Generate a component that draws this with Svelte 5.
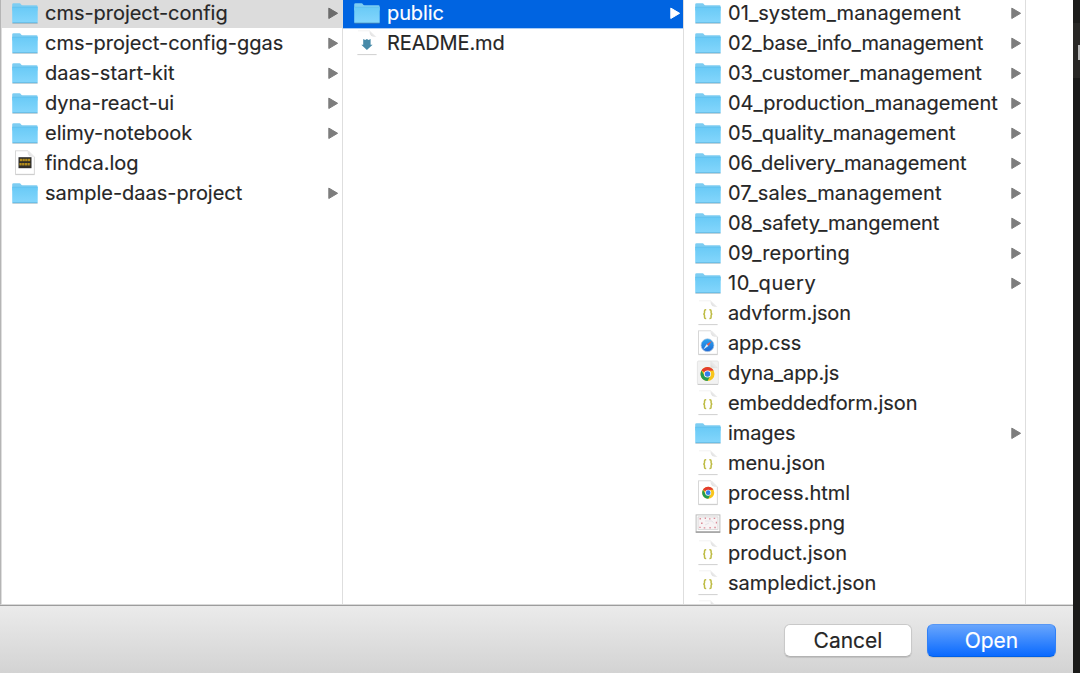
<script>
  const projects = [
    { name: 'cms-project-config', kind: 'folder', tracking: -0.03, selected: true },
    { name: 'cms-project-config-ggas', kind: 'folder', tracking: -0.02 },
    { name: 'daas-start-kit', kind: 'folder', tracking: 0.08 },
    { name: 'dyna-react-ui', kind: 'folder', tracking: -0.03 },
    { name: 'elimy-notebook', kind: 'folder', tracking: 0 },
    { name: 'findca.log', kind: 'log', tracking: -0.07 },
    { name: 'sample-daas-project', kind: 'folder', tracking: -0.02 }
  ];
  const project = [
    { name: 'public', kind: 'folder', tracking: -0.12, active: true },
    { name: 'README.md', kind: 'md', tracking: -0.13 }
  ];
  const contents = [
    { name: '01_system_management', kind: 'folder', tracking: 0.1 },
    { name: '02_base_info_management', kind: 'folder', tracking: -0.16 },
    { name: '03_customer_management', kind: 'folder', tracking: -0.1 },
    { name: '04_production_management', kind: 'folder', tracking: -0.03 },
    { name: '05_quality_management', kind: 'folder', tracking: -0.05 },
    { name: '06_delivery_management', kind: 'folder', tracking: -0.06 },
    { name: '07_sales_management', kind: 'folder', tracking: 0.12 },
    { name: '08_safety_mangement', kind: 'folder', tracking: -0.08 },
    { name: '09_reporting', kind: 'folder', tracking: 0.13 },
    { name: '10_query', kind: 'folder', tracking: 0.55 },
    { name: 'advform.json', kind: 'json', tracking: -0.11 },
    { name: 'app.css', kind: 'css', tracking: -0.13 },
    { name: 'dyna_app.js', kind: 'js', tracking: -0.13 },
    { name: 'embeddedform.json', kind: 'json', tracking: -0.07 },
    { name: 'images', kind: 'folder', tracking: -0.1 },
    { name: 'menu.json', kind: 'json', tracking: -0.05 },
    { name: 'process.html', kind: 'html', tracking: 0 },
    { name: 'process.png', kind: 'png', tracking: -0.08 },
    { name: 'product.json', kind: 'json', tracking: 0.05 },
    { name: 'sampledict.json', kind: 'json', tracking: 0.02 },
    { name: '', kind: 'json', tracking: 0 }
  ];
  const columns = [projects, project, contents];
</script>

<svg class="defs" width="0" height="0" aria-hidden="true">
  <defs>
    <linearGradient id="folderFill" x1="0" y1="0" x2="0" y2="1">
      <stop offset="0" stop-color="#69caf6" />
      <stop offset="1" stop-color="#84d6fc" />
    </linearGradient>
    <linearGradient id="fold" x1="0" y1="1" x2="1" y2="0">
      <stop offset="0" stop-color="#d8d8d8" />
      <stop offset="0.7" stop-color="#f4f4f4" />
    </linearGradient>
    <linearGradient id="safari" x1="0" y1="0" x2="0" y2="1">
      <stop offset="0" stop-color="#2aa5f2" />
      <stop offset="1" stop-color="#1c68d4" />
    </linearGradient>
  </defs>
</svg>

{#snippet page(outlined)}
  {#if outlined}
    <path d="M3.5 2.7h12.5l6.4 6.4v17.2h-18.9z" fill="#fff" stroke="#d3d3d3" stroke-width="0.9" />
  {/if}
  <path d="M15.6 2.4v1.8q0 4.9 6.9 4.9z" fill="url(#fold)" />
  <path d="M4 2.8h12" stroke="#ededed" stroke-width="0.7" />
  <path d="M3.4 26.6h19.2" stroke="#c9c9c9" stroke-width="0.9" />
{/snippet}

{#snippet chrome(cx, cy, scale)}
  <g transform="translate({cx} {cy}) scale({scale})">
    <circle r="7" fill="#f8c51c" />
    <path d="M0 0L-6.06-3.5A7 7 0 0 1 6.06-3.5L0-3.2z" fill="#e33b2e" />
    <path d="M-6.06-3.5A7 7 0 0 0 0 7L3 1.5-3 1.7z" fill="#239b50" />
    <circle r="3.5" fill="#fff" />
    <circle r="2.75" fill="#347de8" />
  </g>
{/snippet}

{#snippet icon(kind)}
  <svg class="icon" viewBox="0 0 26 30" width="26" height="30" aria-hidden="true">
    {#if kind === 'folder'}
      <path d="M.4 25.4h25.2" stroke="#6a8797" stroke-opacity=".4" stroke-width="1" />
      <path d="M.2 6.5Q.2 5.3 1.5 5.3h6c1.4 0 1.4 2 3 2h14q1.1 0 1.1 1.3v4H.2z" fill="#7dcdf2" />
      <path d="M.2 8.9h25.5v15.2q0 .9-.9.9H1.1q-.9 0-.9-.9z" fill="url(#folderFill)" />
      <path d="M.4 9.2h25.1" stroke="#5dbce9" stroke-width=".6" />
      <path d="M.5 24.6h25" stroke="#62b6df" stroke-width=".8" />
    {:else if kind === 'log'}
      {@render page(true)}
      <path d="M6.5 9.2h13v11h-13z" fill="#28282a" />
      <path d="M7.8 12h10.5M7.4 16.2h11" stroke="#b48c1b" stroke-width="2.5" stroke-dasharray="2.3 .4" />
      <path d="M7 14h12M7 18.9h12" stroke="#443a22" stroke-width=".7" />
    {:else if kind === 'md'}
      {@render page(false)}
      <path d="M9.2 11l2 1.1 1.7-1.1 1.7 1.1 2-1.1v5.8h2l-5.7 5.2-5.6-5.2h1.9z" fill="#478aa8" />
    {:else if kind === 'json'}
      {@render page(false)}
      <g fill="none" stroke="#bdbb42" stroke-width="1.5">
        <path d="M11.2 11.7h-.5q-1.2 0-1.2 1.3v1.8q0 1.3-1.3 1.3q1.3 0 1.3 1.3v1.8q0 1.3 1.2 1.3h.5" />
        <path d="M14.4 11.7h.5q1.2 0 1.2 1.3v1.8q0 1.3 1.3 1.3q-1.3 0-1.3 1.3v1.8q0 1.3-1.2 1.3h-.5" />
      </g>
    {:else if kind === 'css'}
      {@render page(true)}
      <circle cx="12.5" cy="17.2" r="6.4" fill="url(#safari)" stroke="#a5bfdb" stroke-width=".7" />
      <path d="M16.8 12.9l-3.4 5.2-1.8-1.8z" fill="#e9574a" />
      <path d="M8.3 21.5l3.3-5.2 1.8 1.8z" fill="#d8edfc" />
    {:else if kind === 'js'}
      <rect x="2.4" y="3" width="21" height="23.2" rx="1.2" fill="#f2f2f2" stroke="#dedede" stroke-width=".7" />
      <path d="M2.6 26.5h20.6" stroke="#c6c6c6" stroke-width=".9" />
      <path d="M15.8 3.2v6.5h6.6z" fill="url(#fold)" stroke="#dcdcdc" stroke-width=".4" />
      {@render chrome(12.5, 16, 1)}
    {:else if kind === 'html'}
      {@render page(true)}
      {@render chrome(13.2, 14.7, 0.86)}
    {:else}
      <rect x="1.1" y="6.9" width="23.8" height="16.8" fill="#fff" stroke="#bcbcbc" />
      <path d="M.7 24.2h24.6" stroke="#909090" stroke-width="1.1" />
      <rect x="3" y="8.9" width="20" height="12.6" fill="#f7f3f4" stroke="#c8c8c8" stroke-width=".6" />
      <g fill="#dc8d98">
        <path d="M4.5 10h1.5v1.5H4.5zM9.7 9.6H11v1.3H9.7zM14 10.2h1.5v1.3H14zM18.7 9.7h1.5v1.4h-1.5zM6 14.6h1.6v1.3H6zM20.8 13.8h1.2v1.6h-1.2zM4.3 18.7h1.4v1.3H4.3zM8.7 19.3h1.6v1.2H8.7zM14.4 19.1h1.4v1.3h-1.4zM19.3 18.8h1.5v1.4h-1.5z" />
      </g>
      <path d="M10 13h7l2 2.5M10 17l4-2" fill="none" stroke="#d9d9df" stroke-width=".6" />
    {/if}
  </svg>
{/snippet}

<div class="screen">
  <main class="dialog">
    <div class="browser">
      {#each columns as items}
        <div class="column">
          {#each items as item}
            <div class="row" class:selected={item.selected} class:active={item.active}>
              {@render icon(item.kind)}
              <span class="name" style:letter-spacing="{item.tracking}px">{item.name}</span>
              {#if item.kind === 'folder'}
                <svg class="arrow" viewBox="0 0 12 14" width="12" height="14" aria-hidden="true">
                  <path d="M1.8 2.1l8.8 5.2-8.8 5.2z" fill="currentColor" stroke="currentColor" stroke-width="1" stroke-linejoin="round" />
                </svg>
              {/if}
            </div>
          {/each}
        </div>
      {/each}
    </div>
    <footer>
      <button>Cancel</button>
      <button class="primary">Open</button>
    </footer>
  </main>
  <aside><span></span></aside>
</div>

<style>
  :global(body) { margin: 0; overflow: hidden; }
  .defs { position: absolute; }
  .screen {
    width: 1080px; height: 673px; display: flex; overflow: hidden;
    background: #fff; color: #262626;
    font: 20px/30px Inter, "Liberation Sans", sans-serif;
    -webkit-text-stroke: 0.15px currentColor;
  }
  .dialog { width: 1073px; display: flex; flex-direction: column; }
  .browser {
    height: 605px; box-sizing: border-box; display: grid;
    grid-template-columns: 342px 341px 342px 1fr;
    border-left: 1px solid #b5b5b5; border-bottom: 1px solid #d9d9d9; overflow: hidden;
    box-shadow: inset 1px 0 #dedede;
  }
  .column { box-sizing: border-box; border-right: 1px solid #dedede; height: 604px; overflow: hidden; }
  .row {
    height: 30px; box-sizing: border-box; display: flex; align-items: center;
    padding: 0 3px 0 11px;
  }
  .row:first-child { margin-top: -2px; }
  .icon { flex: none; margin-right: 7px; }
  .name { flex: 1; white-space: nowrap; }
  .arrow { color: #7d7d7d; flex: none; }
  .column:nth-child(2) .row { padding-right: 2px; }
  .selected { background: #dcdcdc; }
  .selected .arrow { color: #6c6c6c; }
  .active { background: #0064e1; color: #fff; box-shadow: 0 1px #a9ccf6; }
  .active .arrow { color: #fff; }
  footer {
    height: 68px; box-sizing: border-box; border-top: 1px solid #9d9d9d;
    background: linear-gradient(#ebebeb, #d3d3d3);
    display: flex; justify-content: flex-end; gap: 15px; padding: 18px 17px 0 0;
  }
  button {
    width: 128px; height: 33px; box-sizing: border-box; padding: 0;
    border: 1px solid #c9c9c9; border-bottom-color: #b3b3b3; border-radius: 6px;
    background: #fff; color: #262626; font: inherit; font-size: 21px; line-height: 31px;
    box-shadow: 0 1px 1px #0000001c;
  }
  .primary {
    width: 129px; color: #fff; border-color: #5797f5 #3080f7 #0060e6;
    background: linear-gradient(#6ba7fc, #0768ff); background-origin: border-box;
  }
  aside { width: 7px; background: linear-gradient(#1d1c1b 23px, #282725 23px 78px, #1a1a19 78px); }
  aside span { display: block; width: 2px; height: 15px; margin: 45px 0 0 5px; background: #b7b7b7; }
</style>
